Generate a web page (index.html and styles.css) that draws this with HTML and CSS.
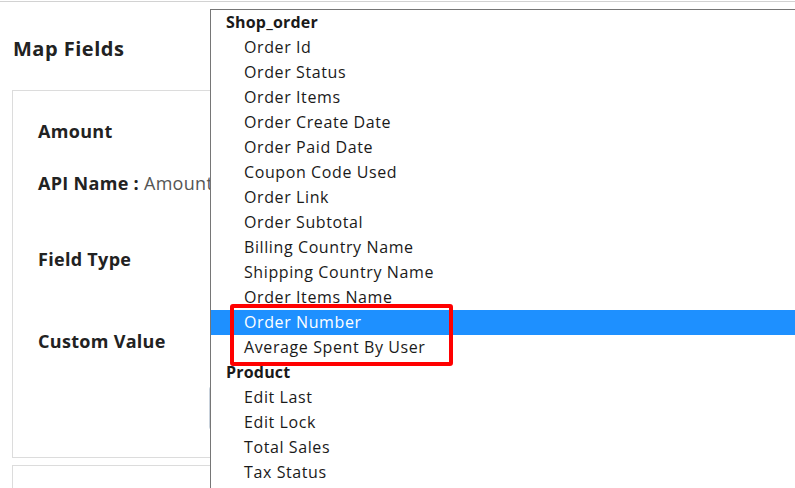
FILE: index.html
```html
<!DOCTYPE html>
<html>
<head>
<meta charset="utf-8">
<link rel="stylesheet" href="styles.css">
</head>
<body>
<div class="topline"></div>
<div class="page">
  <h1 class="title">Map Fields</h1>
  <div class="card">
    <div class="row row-amount"><span class="label">Amount</span></div>
    <div class="row row-api"><span class="label">API Name : </span><span class="value">Amount</span></div>
    <div class="row row-type"><span class="label">Field Type</span></div>
    <div class="row row-custom"><span class="label">Custom Value</span></div>
    <div class="textbox"></div>
  </div>
  <div class="card card2"></div>
</div>

<div class="dropdown">
  <div class="group">Shop_order</div>
  <div class="opt">Order Id</div>
  <div class="opt">Order Status</div>
  <div class="opt">Order Items</div>
  <div class="opt">Order Create Date</div>
  <div class="opt">Order Paid Date</div>
  <div class="opt">Coupon Code Used</div>
  <div class="opt">Order Link</div>
  <div class="opt">Order Subtotal</div>
  <div class="opt">Billing Country Name</div>
  <div class="opt">Shipping Country Name</div>
  <div class="opt">Order Items Name</div>
  <div class="opt selected">Order Number</div>
  <div class="opt">Average Spent By User</div>
  <div class="group">Product</div>
  <div class="opt">Edit Last</div>
  <div class="opt">Edit Lock</div>
  <div class="opt">Total Sales</div>
  <div class="opt">Tax Status</div>
</div>
<div class="highlight-box"></div>
</body>
</html>
```
FILE: styles.css
```css
html, body {
  margin: 0;
  padding: 0;
  background: #fff;
  font-family: "Open Sans", "Noto Sans", sans-serif;
  color: #222;
  overflow: hidden;
  width: 795px;
  height: 488px;
}
.topline {
  height: 1px;
  margin-top: 1px;
  background: #d2d2d2;
}
.page {
  padding: 0 0 0 12px;
}
.title {
  margin: 0;
  padding: 21px 0 0 1px;
  box-sizing: border-box;
  font-size: 20px;
  font-weight: 700;
  letter-spacing: 0.5px;
  line-height: 52px;
  color: #222;
  height: 88px;
}
.card {
  position: relative;
  width: 770px;
  height: 368px;
  border: 1px solid #dcdcdc;
  box-sizing: border-box;
  padding: 0 0 0 25px;
  display: flex;
  flex-direction: column;
}
.card2 {
  margin-top: 7px;
  height: 40px;
}
.row {
  font-size: 18px;
  line-height: 26px;
  letter-spacing: 0.3px;
  white-space: nowrap;
}
.row-amount { margin-top: 27px; }
.row-api { margin-top: 26px; }
.row-type { margin-top: 50px; }
.row-custom { margin-top: 56px; }
.label { font-weight: 700; color: #222; }
.value { font-weight: 400; color: #555; }
.textbox {
  position: absolute;
  left: 196px;
  top: 295px;
  width: 400px;
  height: 44px;
  border: 1px solid #c9d2dc;
  border-radius: 3px;
  box-sizing: border-box;
}
.dropdown {
  position: absolute;
  left: 210px;
  top: 9px;
  width: 640px;
  height: 500px;
  border: 1px solid #767676;
  background: #fff;
  box-sizing: border-box;
}
.group, .opt {
  height: 25px;
  line-height: 25px;
  font-size: 16px;
  letter-spacing: 0.6px;
  color: #1a1a1a;
  white-space: nowrap;
}
.group {
  font-weight: 700;
  letter-spacing: 0.2px;
  padding-left: 15px;
}
.opt {
  padding-left: 33px;
}
.opt.selected {
  background: #1e90ff;
  color: #fff;
}
.highlight-box {
  position: absolute;
  left: 230px;
  top: 304px;
  width: 223px;
  height: 62px;
  border: 4px solid #f00;
  border-radius: 3px;
  box-sizing: border-box;
}
```
